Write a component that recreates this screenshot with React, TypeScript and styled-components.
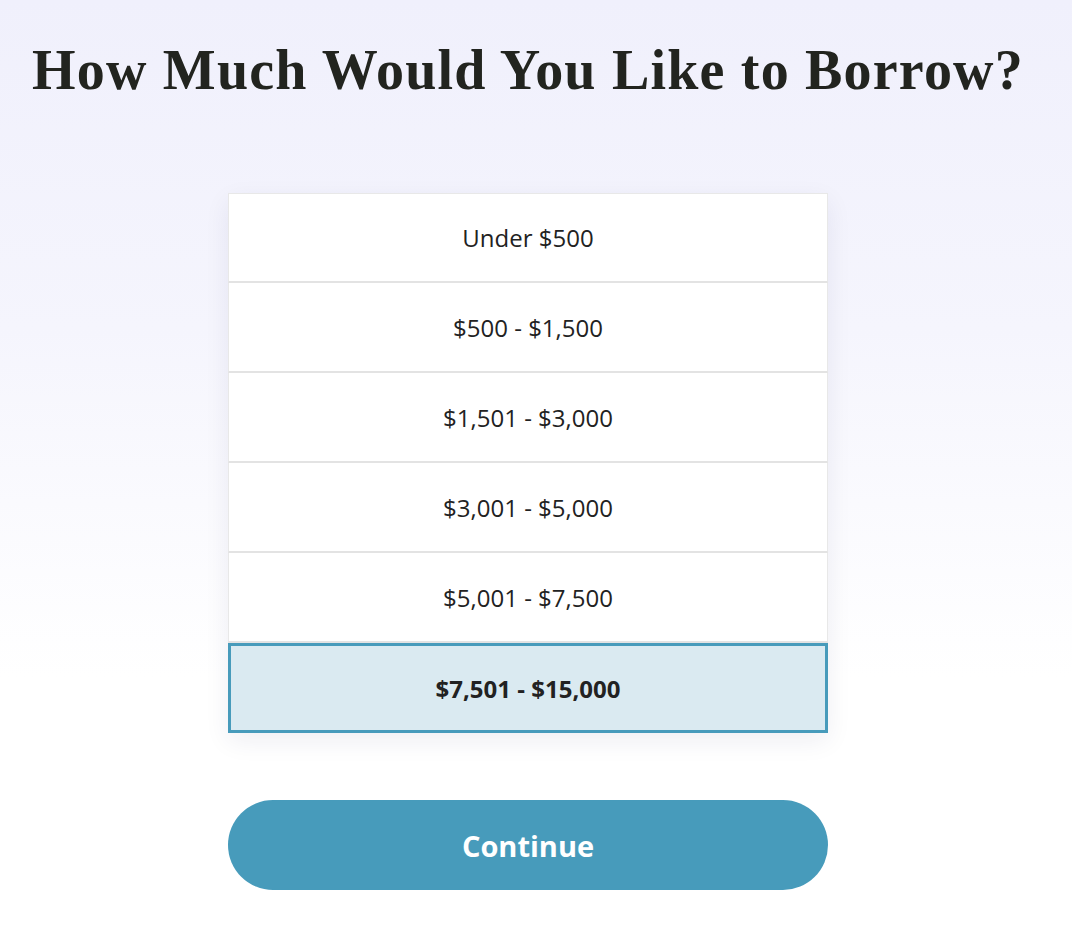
import React, { useState } from 'react';
import styled, { createGlobalStyle } from 'styled-components';

const GlobalStyle = createGlobalStyle`
  html, body {
    margin: 0;
    padding: 0;
  }
  body {
    background: #ffffff;
    font-family: 'Open Sans', 'Liberation Sans', sans-serif;
  }
`;

const Page = styled.div`
  min-height: 940px;
  background: linear-gradient(180deg, #f0f0fc 0%, #f5f5fd 35%, #ffffff 72%, #ffffff 100%);
  display: flex;
  flex-direction: column;
  align-items: center;
  padding: 30px 16px 0 0;
  box-sizing: border-box;
`;

const Title = styled.h1`
  margin: 0;
  font-family: 'Liberation Serif', 'DejaVu Serif', serif;
  font-weight: 700;
  font-size: 56px;
  line-height: 80px;
  color: #22241f;
  letter-spacing: 1.2px;
  text-align: center;
  white-space: nowrap;
`;

const OptionList = styled.div`
  margin-top: 83px;
  width: 600px;
  display: flex;
  flex-direction: column;
  background: #ffffff;
  box-shadow: 0 8px 24px rgba(30, 30, 80, 0.07);
`;

const Option = styled.button<{ $selected?: boolean }>`
  height: 90px;
  box-sizing: border-box;
  margin: 0;
  padding: 0;
  font-family: 'Open Sans', 'Liberation Sans', sans-serif;
  font-size: 24px;
  font-weight: ${p => (p.$selected ? 700 : 400)};
  color: #222222;
  cursor: pointer;
  background: ${p => (p.$selected ? '#daeaf1' : '#ffffff')};
  border: ${p => (p.$selected ? '3px solid #479bbb' : '1px solid #e8e8e8')};
  border-top: ${p => (p.$selected ? '3px solid #479bbb' : 'none')};
  border-bottom: ${p => (p.$selected ? '3px solid #479bbb' : '2px solid #e3e3e3')};

  &:first-child {
    border-top: ${p => (p.$selected ? '3px solid #479bbb' : '1px solid #e8e8e8')};
  }
`;

const ContinueButton = styled.button`
  margin-top: 67px;
  width: 600px;
  height: 90px;
  border: none;
  border-radius: 45px;
  background: #479bbb;
  color: #ffffff;
  font-family: 'Open Sans', 'Liberation Sans', sans-serif;
  font-weight: 700;
  font-size: 29px;
  cursor: pointer;
`;

const options = [
  'Under $500',
  '$500 - $1,500',
  '$1,501 - $3,000',
  '$3,001 - $5,000',
  '$5,001 - $7,500',
  '$7,501 - $15,000',
];

export default function App() {
  const [selected, setSelected] = useState(5);

  return (
    <>
      <GlobalStyle />
      <Page>
        <Title>How Much Would You Like to Borrow?</Title>
        <OptionList>
          {options.map((label, i) => (
            <Option key={label} $selected={i === selected} onClick={() => setSelected(i)}>
              {label}
            </Option>
          ))}
        </OptionList>
        <ContinueButton>Continue</ContinueButton>
      </Page>
    </>
  );
}
